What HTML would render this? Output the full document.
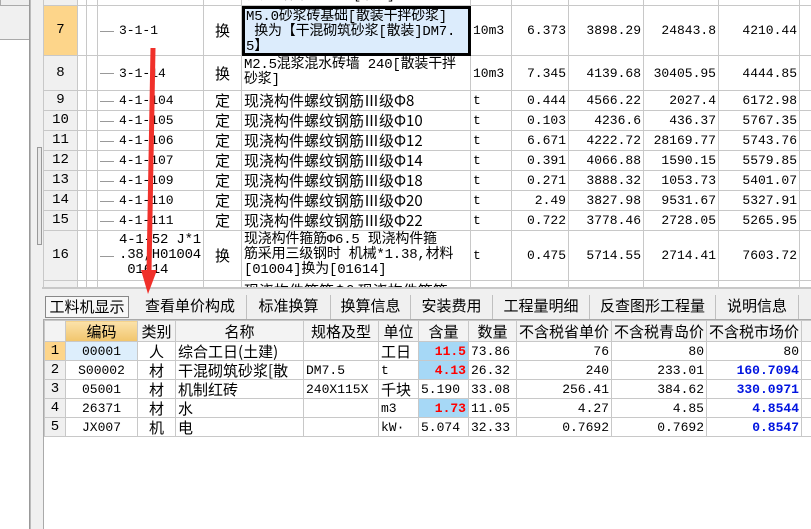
<!DOCTYPE html>
<html><head><meta charset="utf-8"><style>
*{margin:0;padding:0;box-sizing:border-box}
body{width:811px;height:529px;overflow:hidden;background:#fff;position:relative;font-family:"Liberation Mono","Noto Sans CJK SC",monospace;font-size:13px;color:#000}
.abs{position:absolute}
table{border-collapse:collapse;table-layout:fixed;position:absolute}
td{border:1px solid #c8c8c8;overflow:hidden;white-space:nowrap;padding:0 2px;line-height:15px;vertical-align:middle}
.n{background:#f0f0f0;text-align:center;font-size:14px}
.r{text-align:right}
.c{text-align:center}
.k{font-size:15px;font-family:"Noto Sans CJK SC","Liberation Sans",sans-serif}
.w{font-size:14px;letter-spacing:-0.2px}
.w div{height:15px;line-height:15px;white-space:pre;overflow:visible}
.tr{position:relative;padding-left:21px}
.tr:before{content:"";position:absolute;left:2px;top:50%;width:14px;border-top:1px solid #999}
#bt td{height:19px}
#bt .h td{height:21px;text-align:center;font-size:15px;font-family:"Noto Sans CJK SC",sans-serif;background:#f3f3f3}
.red{color:#f00;font-weight:bold;background:#a6d8f6;text-align:right}
.blue{color:#0014e0;font-weight:bold;text-align:right}
.tab{position:absolute;top:295px;height:24px;font-size:15px;font-family:"Noto Sans CJK SC",sans-serif;line-height:22px;text-align:center;border-right:1px solid #c0c0c0}
</style></head><body>
<div class="abs" style="left:0;top:0;width:29px;height:40px;background:#f0f0f0;border-bottom:1px solid #aaa"></div>
<div class="abs" style="left:0;top:0;width:31px;height:6px;border:1px solid #aaa;border-top:0;background:#eee"></div>
<div class="abs" style="left:29px;top:0;width:2px;height:529px;border-left:1px solid #999;border-right:1px solid #bbb"></div>
<div class="abs" style="left:31px;top:0;width:12px;height:529px;background:#f0f0f0"></div>
<div class="abs" style="left:37px;top:147px;width:5px;height:98px;border:1px solid #999;background:#e8e8e8"></div>

<table style="left:43px;top:-15px;width:790px">
<colgroup><col style="width:34px"><col style="width:9px"><col style="width:11px"><col style="width:106px"><col style="width:38px"><col style="width:229px"><col style="width:41px"><col style="width:57px"><col style="width:75px"><col style="width:75px"><col style="width:81px"><col style="width:34px"></colgroup>
<tr style="height:20px"><td class="n"></td><td></td><td></td><td>4-1-5 2.75</td><td></td><td>现浇构件钢筋 1.1[钢筋]</td><td></td><td></td><td></td><td></td><td></td><td></td></tr>
<tr style="height:50px"><td class="n" style="background:#fdd58a">7</td><td></td><td></td><td class="tr">3-1-1</td><td class="c k">换</td><td class="w" style="background:#dcecfc;outline:3px solid #000;outline-offset:-3px;padding:4px 0 0 4px;vertical-align:top"><div>M5.0砂浆砖基础[散装干拌砂浆]</div><div> 换为【干混砌筑砂浆[散装]DM7.</div><div>5】</div></td><td>10m3</td><td class="r">6.373</td><td class="r">3898.29</td><td class="r">24843.8</td><td class="r">4210.44</td><td></td></tr>
<tr style="height:35px"><td class="n">8</td><td></td><td></td><td class="tr">3-1-14</td><td class="c k">换</td><td class="w"><div>M2.5混浆混水砖墙 240[散装干拌</div><div>砂浆]</div></td><td>10m3</td><td class="r">7.345</td><td class="r">4139.68</td><td class="r">30405.95</td><td class="r">4444.85</td><td></td></tr>
<tr style="height:20px"><td class="n">9</td><td></td><td></td><td class="tr">4-1-104</td><td class="c k">定</td><td class="k">现浇构件螺纹钢筋Ⅲ级Φ8</td><td>t</td><td class="r">0.444</td><td class="r">4566.22</td><td class="r">2027.4</td><td class="r">6172.98</td><td></td></tr>
<tr style="height:20px"><td class="n">10</td><td></td><td></td><td class="tr">4-1-105</td><td class="c k">定</td><td class="k">现浇构件螺纹钢筋Ⅲ级Φ10</td><td>t</td><td class="r">0.103</td><td class="r">4236.6</td><td class="r">436.37</td><td class="r">5767.35</td><td></td></tr>
<tr style="height:20px"><td class="n">11</td><td></td><td></td><td class="tr">4-1-106</td><td class="c k">定</td><td class="k">现浇构件螺纹钢筋Ⅲ级Φ12</td><td>t</td><td class="r">6.671</td><td class="r">4222.72</td><td class="r">28169.77</td><td class="r">5743.76</td><td></td></tr>
<tr style="height:20px"><td class="n">12</td><td></td><td></td><td class="tr">4-1-107</td><td class="c k">定</td><td class="k">现浇构件螺纹钢筋Ⅲ级Φ14</td><td>t</td><td class="r">0.391</td><td class="r">4066.88</td><td class="r">1590.15</td><td class="r">5579.85</td><td></td></tr>
<tr style="height:20px"><td class="n">13</td><td></td><td></td><td class="tr">4-1-109</td><td class="c k">定</td><td class="k">现浇构件螺纹钢筋Ⅲ级Φ18</td><td>t</td><td class="r">0.271</td><td class="r">3888.32</td><td class="r">1053.73</td><td class="r">5401.07</td><td></td></tr>
<tr style="height:20px"><td class="n">14</td><td></td><td></td><td class="tr">4-1-110</td><td class="c k">定</td><td class="k">现浇构件螺纹钢筋Ⅲ级Φ20</td><td>t</td><td class="r">2.49</td><td class="r">3827.98</td><td class="r">9531.67</td><td class="r">5327.91</td><td></td></tr>
<tr style="height:20px"><td class="n">15</td><td></td><td></td><td class="tr">4-1-111</td><td class="c k">定</td><td class="k">现浇构件螺纹钢筋Ⅲ级Φ22</td><td>t</td><td class="r">0.722</td><td class="r">3778.46</td><td class="r">2728.05</td><td class="r">5265.95</td><td></td></tr>
<tr style="height:50px"><td class="n">16</td><td></td><td></td><td class="tr w"><div>4-1-52 J*1</div><div>.38,H01004</div><div> 01614</div></td><td class="c k">换</td><td class="w"><div>现浇构件箍筋Φ6.5 现浇构件箍</div><div>筋采用三级钢时 机械*1.38,材料</div><div>[01004]换为[01614]</div></td><td>t</td><td class="r">0.475</td><td class="r">5714.55</td><td class="r">2714.41</td><td class="r">7603.72</td><td></td></tr>
<tr style="height:20px"><td class="n"></td><td></td><td></td><td></td><td></td><td class="k">现浇构件箍筋Φ8 现浇构件箍筋</td><td></td><td></td><td></td><td></td><td></td><td></td></tr>
</table>
<div class="abs" style="left:42px;top:287px;width:769px;height:33px;background:#f0f0f0;border-top:2px solid #c8c8c8"></div>

<div class="tab" style="left:45px;width:84px;border:1px solid #888;background:#f7f7f7;top:296px;height:22px;line-height:20px">工料机显示</div>
<div class="tab" style="left:134px;width:113px">查看单价构成</div>
<div class="tab" style="left:247px;width:84px">标准换算</div>
<div class="tab" style="left:331px;width:80px">换算信息</div>
<div class="tab" style="left:411px;width:82px">安装费用</div>
<div class="tab" style="left:493px;width:97px">工程量明细</div>
<div class="tab" style="left:590px;width:126px">反查图形工程量</div>
<div class="tab" style="left:716px;width:83px">说明信息</div>

<div class="abs" style="left:43px;top:319px;width:768px;height:210px;background:#fff;border-left:1px solid #aaa;border-top:1px solid #aaa"></div>
<table id="bt" style="left:44px;top:320px;width:790px">
<colgroup><col style="width:21px"><col style="width:72px"><col style="width:38px"><col style="width:128px"><col style="width:75px"><col style="width:40px"><col style="width:50px"><col style="width:48px"><col style="width:95px"><col style="width:95px"><col style="width:95px"><col style="width:33px"></colgroup>
<tr class="h"><td></td><td style="background:linear-gradient(#fbe2ab,#f1c56c)">编码</td><td>类别</td><td>名称</td><td>规格及型</td><td>单位</td><td>含量</td><td>数量</td><td>不含税省单价</td><td>不含税青岛价</td><td>不含税市场价</td><td>合</td></tr>
<tr><td class="n" style="background:#fdd58a">1</td><td class="c" style="background:#ddeefc">00001</td><td class="c k">人</td><td class="k">综合工日(土建)</td><td></td><td class="k">工日</td><td class="red">11.5</td><td>73.86</td><td class="r">76</td><td class="r">80</td><td class="r">80</td><td></td></tr>
<tr><td class="n">2</td><td class="c">S00002</td><td class="c k">材</td><td class="k">干混砌筑砂浆[散</td><td>DM7.5</td><td>t</td><td class="red">4.13</td><td>26.32</td><td class="r">240</td><td class="r">233.01</td><td class="blue">160.7094</td><td></td></tr>
<tr><td class="n">3</td><td class="c">05001</td><td class="c k">材</td><td class="k">机制红砖</td><td>240X115X</td><td class="k">千块</td><td>5.190</td><td>33.08</td><td class="r">256.41</td><td class="r">384.62</td><td class="blue">330.0971</td><td></td></tr>
<tr><td class="n">4</td><td class="c">26371</td><td class="c k">材</td><td class="k">水</td><td></td><td>m3</td><td class="red">1.73</td><td>11.05</td><td class="r">4.27</td><td class="r">4.85</td><td class="blue">4.8544</td><td></td></tr>
<tr><td class="n">5</td><td class="c">JX007</td><td class="c k">机</td><td class="k">电</td><td></td><td>kW·</td><td>5.074</td><td>32.33</td><td class="r">0.7692</td><td class="r">0.7692</td><td class="blue">0.8547</td><td></td></tr>
</table>

<svg class="abs" style="left:0;top:0" width="811" height="529">
<line x1="153" y1="48" x2="149" y2="272" stroke="#f0302a" stroke-width="5"/>
<polygon points="141,270 157,270 148,294" fill="#f0302a"/>
</svg>
</body></html>
